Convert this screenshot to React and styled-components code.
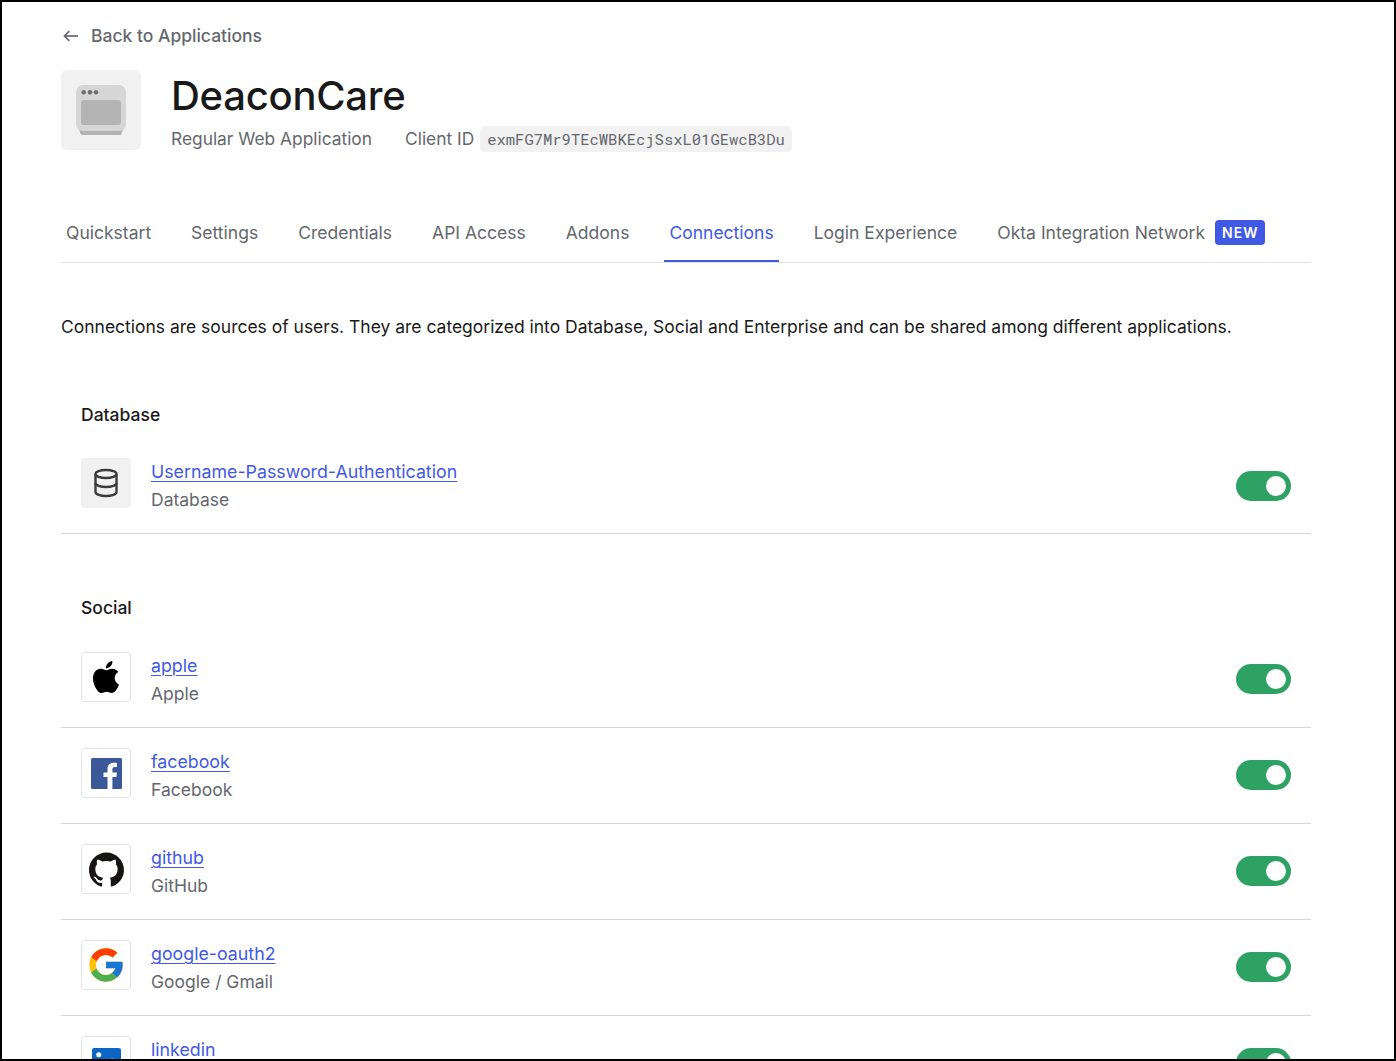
import React from "react";
import styled, { createGlobalStyle } from "styled-components";
import { SiApple, SiGithub } from "react-icons/si";
import { FcGoogle } from "react-icons/fc";

const GlobalStyle = createGlobalStyle`
  html, body {
    margin: 0;
    padding: 0;
    background: #fff;
  }
  body {
    font-family: Inter, "Liberation Sans", sans-serif;
    color: #191919;
  }
`;

const Frame = styled.div`
  box-sizing: border-box;
  width: 1396px;
  height: 1061px;
  border: 2px solid #000;
  overflow: hidden;
  padding: 0 83px 0 59px;
`;

const BackLink = styled.a`
  display: flex;
  align-items: center;
  gap: 12px;
  height: 24px;
  margin-top: 22px;
  color: #65676e;
  font-size: 17.5px;
  font-weight: 500;
  line-height: 24px;
`;

const Header = styled.header`
  display: flex;
  gap: 30px;
  height: 80px;
  margin-top: 22px;
`;

const AppTile = styled.div`
  width: 80px;
  height: 80px;
  border-radius: 6px;
  background: #f1f1f1;
  display: flex;
  align-items: center;
  justify-content: center;
`;

const HeaderText = styled.div`
  display: flex;
  flex-direction: column;
`;

const Title = styled.h1`
  margin: 1px 0 0;
  font-size: 40px;
  font-weight: 500;
  line-height: 50px;
  letter-spacing: -0.25px;
  color: #191919;
`;

const Meta = styled.div`
  display: flex;
  align-items: flex-start;
  margin-top: 5px;
  height: 26px;
  font-size: 17.35px;
  line-height: 25px;
  color: #65676e;
`;

const ClientLabel = styled.span`
  margin-left: 33px;
  margin-right: 5.5px;
`;

const Code = styled.code`
  font-family: "Roboto Mono", "DejaVu Sans Mono", "Liberation Mono", monospace;
  font-size: 15.5px;
  line-height: 26px;
  padding: 0 7.5px;
  border-radius: 5px;
  background: #f1f1f1;
  color: #65676e;
`;

const Tabs = styled.nav`
  display: flex;
  gap: 30px;
  margin-top: 55px;
  height: 57px;
  border-bottom: 1px solid #e3e3e3;
`;

const Tab = styled.a`
  display: flex;
  align-items: center;
  gap: 10px;
  height: 57px;
  padding: 0 5px;
  box-sizing: border-box;
  font-size: 17.52px;
  color: ${(p) => (p.$active ? "#3f59e4" : "#65676e")};
  border-bottom: 2px solid ${(p) => (p.$active ? "#3f59e4" : "transparent")};
`;

const Badge = styled.span`
  background: #3f59e4;
  color: #fff;
  font-size: 14px;
  font-weight: 600;
  letter-spacing: 1px;
  line-height: 25px;
  padding: 0 7px;
  border-radius: 4px;
`;

const Intro = styled.p`
  margin: 52px 0 0;
  font-size: 17.48px;
  line-height: 24px;
  color: #191919;
`;

const SectionTitle = styled.h2`
  margin: 0;
  padding: 0 20px;
  font-size: 17.5px;
  font-weight: 500;
  line-height: 24px;
  color: #191919;
  margin-top: ${(p) => p.$top}px;
`;

const Row = styled.div`
  display: flex;
  align-items: flex-start;
  gap: 20px;
  padding: ${(p) => p.$top}px 20px 25px;
  border-bottom: 1px solid #d6d6d6;
`;

const IconBox = styled.div`
  box-sizing: border-box;
  flex: none;
  width: 50px;
  height: 50px;
  border-radius: 4px;
  display: flex;
  align-items: center;
  justify-content: center;
  background: ${(p) => (p.$filled ? "#f1f1f1" : "#fff")};
  border: ${(p) => (p.$filled ? "none" : "1px solid #e3e3e3")};
`;

const RowText = styled.div`
  box-sizing: border-box;
  flex: 1;
  height: 50px;
  padding-top: 3px;
  display: flex;
  flex-direction: column;
  gap: 6px;
  font-size: 17.5px;
  line-height: 22px;
`;

const RowLink = styled.a`
  color: #3f59e4;
  font-size: 17.8px;
  text-decoration: underline;
  text-underline-offset: 3px;
  text-decoration-thickness: 1px;
  align-self: flex-start;
`;

const RowSub = styled.span`
  color: #65676e;
`;

const Toggle = styled.div`
  position: relative;
  flex: none;
  width: 55px;
  height: 30px;
  margin-top: ${(p) => p.$top}px;
  border-radius: 15px;
  background: #2ea262;
`;

const Knob = styled.span`
  position: absolute;
  top: 5px;
  right: 5px;
  width: 20px;
  height: 20px;
  border-radius: 50%;
  background: #fff;
`;

const LinkedinSvg = styled.svg`
  margin-top: 3px;
`;

const ArrowGlyph = () => (
  <svg width="18" height="14" viewBox="0 0 18 14" fill="none" stroke="#65676e" strokeWidth="1.700">
    <path d="M3.500 7H17" />
    <path d="M8.300 2.200 3.500 7l4.800 4.800" />
  </svg>
);

const AppGlyph = () => (
  <svg width="50" height="50" viewBox="0 0 50 50">
    <path d="M2 42h46l-2.700 7a1.500 1.500 0 0 1-1.400 1H6.100a1.500 1.500 0 0 1-1.400-1z" fill="#b4b4b4" />
    <rect x="0" y="0" width="50" height="46" rx="7" fill="#d6d6d6" />
    <rect x="5" y="15" width="40" height="25" rx="3" fill="#b4b4b4" />
    <circle cx="7.700" cy="7.300" r="2.300" fill="#6f6f6f" />
    <circle cx="14" cy="7.300" r="2.300" fill="#6f6f6f" />
    <circle cx="20" cy="7.300" r="2.300" fill="#6f6f6f" />
  </svg>
);

const DatabaseGlyph = () => (
  <svg width="26" height="30" viewBox="0 0 26 30" fill="none" stroke="#3c3c3c" strokeWidth="2.400">
    <ellipse cx="13" cy="6" rx="10.500" ry="4" />
    <path d="M2.500 6v18c0 2.200 4.700 4 10.500 4s10.500-1.800 10.500-4V6" />
    <path d="M2.500 15c0 2.200 4.700 4 10.500 4s10.500-1.800 10.500-4" />
  </svg>
);

const FacebookGlyph = () => (
  <svg width="31" height="31" viewBox="0 0 31 31">
    <rect width="31" height="31" rx="1.500" fill="#3b5998" />
    <path
      d="M21.400 31V19.100h4l.6-4.700h-4.600v-3c0-1.300.4-2.300 2.300-2.300H26V5c-.4-.1-1.900-.2-3.500-.2-3.500 0-6 2.200-6 6.100v3.500h-4v4.700h4V31z"
      fill="#fff"
    />
  </svg>
);

const LinkedinGlyph = () => (
  <LinkedinSvg width="29" height="29" viewBox="0 0 30 30">
    <rect width="30" height="30" rx="2" fill="#0a66c2" />
    <circle cx="7" cy="7" r="2.600" fill="#fff" />
    <rect x="4.800" y="11.500" width="4.400" height="14" fill="#fff" />
    <path
      d="M12.500 11.500h4.200v2c.8-1.300 2.300-2.400 4.500-2.400 4.200 0 5.300 2.700 5.300 6.400v8h-4.400v-7.100c0-1.800-.4-3.400-2.300-3.400s-3 1.400-3 3.400v7.100h-4.300z"
      fill="#fff"
    />
  </LinkedinSvg>
);

const Connection = ({ name, sub, icon, filled, top = 20, toggleTop = 12 }) => (
  <Row $top={top}>
    <IconBox $filled={filled}>{icon}</IconBox>
    <RowText>
      <RowLink>{name}</RowLink>
      <RowSub>{sub}</RowSub>
    </RowText>
    <Toggle $top={toggleTop}>
      <Knob />
    </Toggle>
  </Row>
);

const tabs = [
  "Quickstart",
  "Settings",
  "Credentials",
  "API Access",
  "Addons",
  "Connections",
  "Login Experience",
];

const social = [
  { name: "apple", sub: "Apple", icon: <SiApple size={32} color="#000" />, top: 32 },
  { name: "facebook", sub: "Facebook", icon: <FacebookGlyph /> },
  { name: "github", sub: "GitHub", icon: <SiGithub size={35} color="#161514" /> },
  { name: "google-oauth2", sub: "Google / Gmail", icon: <FcGoogle size={40} /> },
  { name: "linkedin", sub: "LinkedIn", icon: <LinkedinGlyph /> },
];

export default function App() {
  return (
    <Frame>
      <GlobalStyle />
      <BackLink>
        <ArrowGlyph />
        Back to Applications
      </BackLink>
      <Header>
        <AppTile>
          <AppGlyph />
        </AppTile>
        <HeaderText>
          <Title>DeaconCare</Title>
          <Meta>
            Regular Web Application
            <ClientLabel>Client ID</ClientLabel>
            <Code>exmFG7Mr9TEcWBKEcjSsxL01GEwcB3Du</Code>
          </Meta>
        </HeaderText>
      </Header>
      <Tabs>
        {tabs.map((t) => (
          <Tab key={t} $active={t === "Connections"}>
            {t}
          </Tab>
        ))}
        <Tab>
          Okta Integration Network
          <Badge>NEW</Badge>
        </Tab>
      </Tabs>
      <Intro>
        Connections are sources of users. They are categorized into Database, Social and Enterprise and can be shared
        among different applications.
      </Intro>
      <SectionTitle $top={64}>Database</SectionTitle>
      <Connection
        filled
        top={31}
        toggleTop={13}
        name="Username-Password-Authentication"
        sub="Database"
        icon={<DatabaseGlyph />}
      />
      <SectionTitle $top={62}>Social</SectionTitle>
      {social.map((c) => (
        <Connection key={c.name} {...c} />
      ))}
    </Frame>
  );
}
